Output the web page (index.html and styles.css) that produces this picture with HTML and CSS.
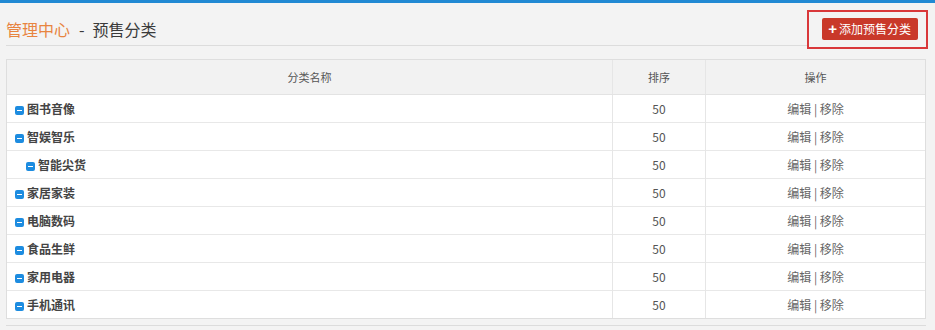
FILE: index.html
```html
<!DOCTYPE html>
<html>
  <head>
    <title>预售分类</title>
    <link rel="stylesheet" href="styles.css">
  </head>
  <body>
    <div class="topbar"></div>
    <div class="page">
      <div class="header">
        <h1><span class="home">管理中心</span><span class="sep">-</span>预售分类</h1>
        <div class="mark">
          <button class="add-button"><span class="plus">+</span>添加预售分类</button>
        </div>
      </div>

      <div class="panel">
        <table>
          <tr>
            <th class="col-name">分类名称</th>
            <th class="col-sort">排序</th>
            <th>操作</th>
          </tr>
          <tr>
            <td class="name"><i class="fold"></i>图书音像</td>
            <td class="num">50</td>
            <td class="ops">编辑 | 移除</td>
          </tr>
          <tr>
            <td class="name"><i class="fold"></i>智娱智乐</td>
            <td class="num">50</td>
            <td class="ops">编辑 | 移除</td>
          </tr>
          <tr>
            <td class="name child"><i class="fold"></i>智能尖货</td>
            <td class="num">50</td>
            <td class="ops">编辑 | 移除</td>
          </tr>
          <tr>
            <td class="name"><i class="fold"></i>家居家装</td>
            <td class="num">50</td>
            <td class="ops">编辑 | 移除</td>
          </tr>
          <tr>
            <td class="name"><i class="fold"></i>电脑数码</td>
            <td class="num">50</td>
            <td class="ops">编辑 | 移除</td>
          </tr>
          <tr>
            <td class="name"><i class="fold"></i>食品生鲜</td>
            <td class="num">50</td>
            <td class="ops">编辑 | 移除</td>
          </tr>
          <tr>
            <td class="name"><i class="fold"></i>家用电器</td>
            <td class="num">50</td>
            <td class="ops">编辑 | 移除</td>
          </tr>
          <tr>
            <td class="name"><i class="fold"></i>手机通讯</td>
            <td class="num">50</td>
            <td class="ops">编辑 | 移除</td>
          </tr>
        </table>
      </div>
      <div class="footer-line"></div>
    </div>
  </body>
</html>
```

FILE: styles.css
```css
body {
  margin: 0;
  background-color: #f3f3f3;
  font-family: "Noto Sans CJK SC", "Liberation Sans", sans-serif;
  color: #333;
}
.topbar {
  height: 3px;
  background-color: #2189d3;
}
.page {
  padding: 0 9px 0 6px;
}
.header {
  display: flex;
  align-items: center;
  justify-content: space-between;
  height: 42px;
  border-bottom: 1px solid #dcdcdc;
}
h1 {
  margin: 0;
  font-size: 16px;
  font-weight: normal;
  color: #3a3a3a;
  line-height: 20px;
  padding-top: 9px;
}
.home {
  color: #e8843f;
}
.sep {
  margin: 0 8px 0 9px;
}
.mark {
  border: 2px solid #d9383a;
  padding: 6px 8px 7px 13px;
  margin-top: 10px;
  margin-right: -2px;
  background-color: #f3f3f3;
  position: relative;
}
.add-button {
  display: flex;
  align-items: center;
  height: 22px;
  padding: 0 7px 0 6px;
  border: none;
  border-radius: 2px;
  background-color: #c9392a;
  color: #fff;
  font-family: "Noto Sans CJK SC", sans-serif;
  font-size: 12px;
  line-height: 22px;
  cursor: pointer;
}
.plus {
  font-size: 15px;
  font-weight: bold;
  margin-right: 2px;
  font-family: "Liberation Sans", sans-serif;
}
.panel {
  margin-top: 13px;
  border: 1px solid #dedede;
  background-color: #fff;
}
table {
  width: 100%;
  border-collapse: collapse;
}
th,
td {
  border-left: 1px solid #e6e6e6;
  font-size: 11px;
}
th:first-child,
td:first-child {
  border-left: none;
}
th {
  height: 34px;
  padding: 0;
  background-color: #f2f2f2;
  font-weight: normal;
  color: #555;
  border-bottom: 1px solid #e3e3e3;
}
.col-name {
  width: 605px;
}
.col-sort {
  width: 92px;
}
td {
  height: 27px;
  padding: 0;
  border-top: 1px solid #e8e8e8;
  font-size: 12px;
}
tr:nth-child(2) td {
  border-top: none;
}
.name {
  padding-left: 8px;
  font-weight: bold;
  color: #444;
}
.name.child {
  padding-left: 19px;
}
.fold {
  display: inline-block;
  width: 9px;
  height: 9px;
  margin-right: 3px;
  border-radius: 2px;
  background-color: #1d8ce0;
  vertical-align: -1px;
  position: relative;
}
.fold::after {
  content: "";
  position: absolute;
  left: 2px;
  top: 4px;
  width: 5px;
  height: 1px;
  background-color: #fff;
}
.num,
.ops {
  text-align: center;
  color: #555;
}
.ops {
  color: #666;
}
.footer-line {
  margin-top: 6px;
  border-top: 1px solid #dcdcdc;
}
```
